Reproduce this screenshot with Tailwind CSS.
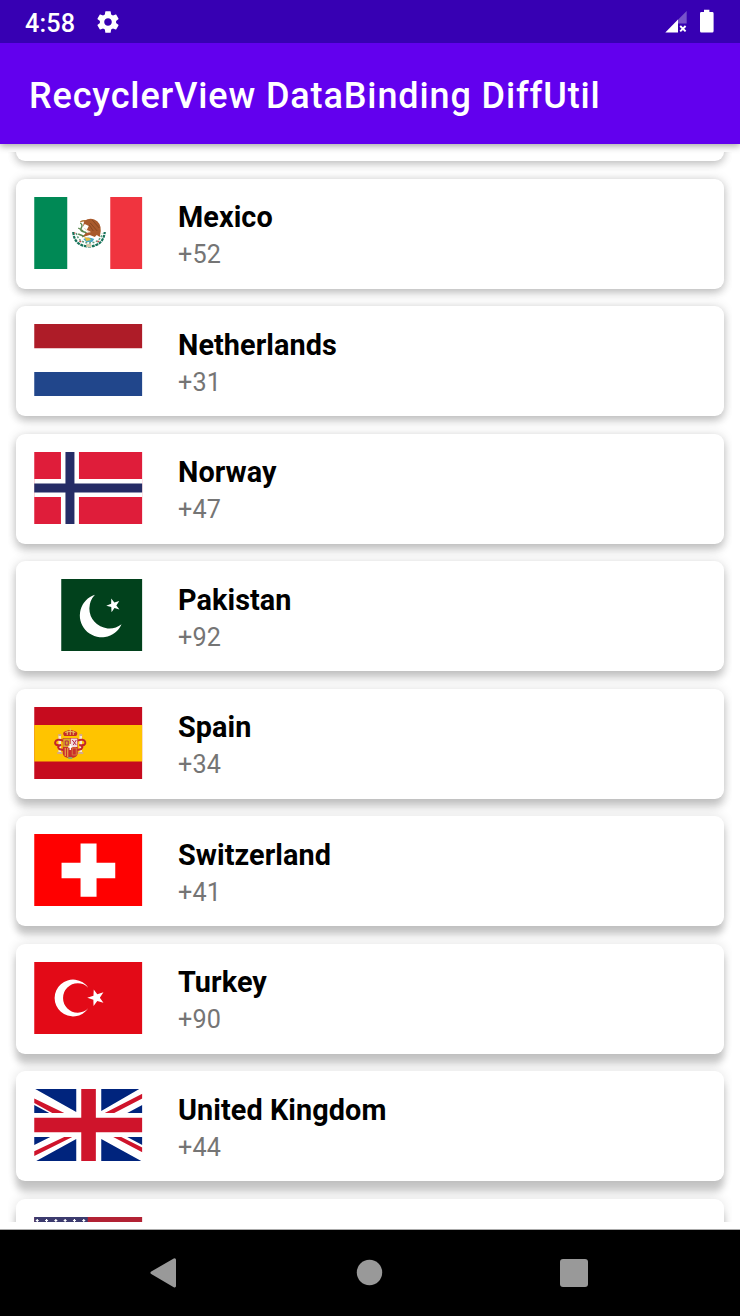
<!DOCTYPE html>
<html lang="en">
<head>
<meta charset="utf-8">
<title>RecyclerView DataBinding DiffUtil</title>
<script src="https://cdn.jsdelivr.net/npm/@tailwindcss/browser@4"></script>
</head>
<body class="bg-white font-['Roboto',sans-serif]">
<div class="w-[740px] h-[1316px] flex flex-col overflow-hidden bg-white">
  <header class="relative z-10 shrink-0 shadow-[0_2px_7px_rgba(0,0,0,0.36)]">
    <div class="h-[43px] bg-[#3700b3] flex items-center pl-[25px] text-white">
      <span class="w-[70px] text-[25.2px] leading-[30px] font-medium pt-[4px] tracking-[0.2px]">4:58</span>
      <svg class="w-[26px] h-[26px]" viewBox="0 0 24 24" fill="#fff"><path d="M19.43 12.98c.04-.32.07-.64.07-.98s-.03-.66-.07-.98l2.11-1.65c.19-.15.24-.42.12-.64l-2-3.46c-.12-.22-.39-.3-.61-.22l-2.49 1c-.52-.4-1.08-.73-1.69-.98l-.38-2.65C14.46 2.18 14.25 2 14 2h-4c-.25 0-.46.18-.49.42l-.38 2.65c-.61.25-1.17.59-1.69.98l-2.49-1c-.23-.09-.49 0-.61.22l-2 3.46c-.13.22-.07.49.12.64l2.11 1.65c-.04.32-.07.65-.07.98s.03.66.07.98l-2.11 1.65c-.19.15-.24.42-.12.64l2 3.46c.12.22.39.3.61.22l2.49-1c.52.4 1.08.73 1.69.98l.38 2.65c.03.24.24.42.49.42h4c.25 0 .46-.18.49-.42l.38-2.65c.61-.25 1.17-.59 1.69-.98l2.49 1c.23.09.49 0 .61-.22l2-3.46c.12-.22.07-.49-.12-.64l-2.11-1.65zM12 15.5c-1.93 0-3.5-1.57-3.5-3.5s1.57-3.5 3.500-3.500 3.500 1.570 3.500 3.500-1.570 3.500-3.500 3.500z"/></svg>
      <svg class="ml-auto w-[23px] h-[24px]" viewBox="665 10 23 24"><path d="M686.700 11v12.500h-9V20z" fill="#fff" opacity=".32"/><path d="M665.300 32.400 678 19.600v12.800z" fill="#fff"/><path d="m680.200 26 5.400 5.400m0-5.400-5.400 5.400" stroke="#fff" stroke-width="1.900"/></svg>
      <svg class="ml-[11px] mr-[25px] w-4 h-[26px]" viewBox="699 9 16 26"><path d="M704 9.800h5.400v2.200h2.800q1.400 0 1.400 1.400v17.700q0 1.500-1.400 1.500h-10.800q-1.400 0-1.400-1.500V13.400q0-1.400 1.400-1.400H704z" fill="#fff"/></svg>
    </div>
    <div class="h-[101px] bg-[#6200ee] flex items-center pl-[29px] pt-[4px]">
      <h1 class="text-[36px] leading-[42px] font-medium tracking-[0.88px] text-white whitespace-nowrap">RecyclerView DataBinding DiffUtil</h1>
    </div>
  </header>

  <main class="mt-2 mx-2 h-[1070px] shrink-0 overflow-hidden">
    <div id="list" class="-mt-[101px] px-2 flex flex-col gap-[17.5px]"></div>
  </main>

  <nav class="mt-[7px] h-[87px] shrink-0 bg-black flex items-center justify-between pl-[150px] pr-[152px] pb-[1px] border-t border-[#aaa]">
    <svg class="w-7 h-8" viewBox="150 1257 28 32"><path d="M174.500 1259.700 152 1272.800 174.500 1286z" fill="#999" stroke="#999" stroke-width="3" stroke-linejoin="round"/></svg>
    <svg class="w-[27px] h-[27px]" viewBox="0 0 27 27"><circle cx="13.500" cy="13.500" r="12.700" fill="#999"/></svg>
    <span class="w-[28px] h-[28px] rounded-[3px] bg-[#999]"></span>
  </nav>
</div>

<svg class="hidden">
  <symbol id="Mexico" viewBox="0 0 108 72">
    <path fill="#fff" d="M0 0h108v72H0z"/><path fill="#008955" d="M0 0h33v72H0z"/><path fill="#f0343f" d="M76 0h32v72H76z"/>
    <g fill="none">
      <path d="M39 35q1 14 15.500 14.500Q69 49 70.500 35" stroke="#17735a" stroke-width="2.200" stroke-dasharray="3 .8"/>
      <path d="M42 36q2 9.500 13 10 11-.5 13-9.500" stroke="#5f9b7c" stroke-width="1.500" stroke-dasharray="2 1.500"/>
      <path d="M46 26q3 2 1 5t3 4-2 5M44 31l5 3M44 37l5 2" stroke="#59884f" stroke-width="1.400"/>
      <path d="M46 25q3-2 6-1" stroke="#b07738" stroke-width="1.500"/>
    </g>
    <path d="M50 24q5-3.500 10-1.500 7 3 6.500 11.500l-1 6-3-2-2 2-5-2-7 2 3-4 5-1-4-2 2-4-4-2-2 3z" fill="#a95a2c"/>
    <path d="m56 26 7 8m-5-11 7 8m-10-3 4 6" stroke="#7e421f" stroke-width=".8"/>
    <path d="M50 31q2 3 6 4" stroke="#ecd2b5" stroke-width="1" fill="none"/>
    <path d="M49 42q5-3 11 0l-2 3h-6z" fill="#48a7c5"/><path d="M50 40l5 1 2 2-5 1z" fill="#e5ba36"/>
    <path d="M52 47h5v3h-5z" fill="#d8c9aa"/><path d="M45 44l2 1m16 0 2-1M40 36h1" stroke="#c44543" stroke-width="1.300"/>
  </symbol>
  <symbol id="Netherlands" viewBox="0 0 108 72"><path fill="#fff" d="M0 0h108v72H0z"/><path fill="#ae1c28" d="M0 0h108v24.300H0z"/><path fill="#21468b" d="M0 48h108v24H0z"/></symbol>
  <symbol id="Norway" viewBox="0 0 108 72"><path fill="#df1d3a" d="M0 0h108v72H0z"/><path d="M35.700 0v72M0 36h108" stroke="#fff" stroke-width="18"/><path d="M35.700 0v72M0 36h108" stroke="#252c66" stroke-width="9"/></symbol>
  <symbol id="Pakistan" viewBox="0 0 108 72">
    <path fill="#01411c" d="M27 0h81v72H27z"/>
    <path d="M60.700 15.700A21.800 21.800 0 1 0 87.300 45.300A19.950 19.950 0 0 1 60.700 15.700z" fill="#fff"/>
    <path d="m77 19.500 3.100 4.100 4.900-1.600-2.900 4.400 3.100 4-5-1.400-2.900 4.300-.3-5.200-5-1.400 4.900-1.900z" fill="#fff"/>
  </symbol>
  <symbol id="Spain" viewBox="0 0 108 72">
    <path fill="#c60b1e" d="M0 0h108v72H0z"/><path fill="#ffc400" d="M0 18h108v36.500H0z"/>
    <path d="M25.500 28v17m21-17v17" stroke="#f4e8cf" stroke-width="2.600"/><path d="M23 46h5m16 0h5M24 28h3m18 0h3" stroke="#d4a98b" stroke-width="1.800"/>
    <path d="M30 34q-8-3-9 1t6 3q-5 1-2 4l4 1M42 34q8-3 9 1t-6 3q5 1 2 4l-4 1" fill="none" stroke="#c2252b" stroke-width="2"/>
    <path d="M30 29q-3-4 2-5 4-2 8 0 5 1 2 5z" fill="#c42c29"/><path d="M31 25.500q5-2.500 10 0M36 21.500v6.500M33 24v4m6-4v4" stroke="#e8c465" stroke-width="1" fill="none"/>
    <path d="M28.500 31h15v15q0 5-7.500 5t-7.500-5z" fill="#c92d2d"/><path d="M29 31.500h7V40h-7z" fill="#d9a72d"/><path d="M36.500 31.500h6.500V40h-6.500z" fill="#f0dadd"/>
    <path d="m38 33 4 5m0-5-3 5M31 34h3v4h-3z" stroke="#b3274a" stroke-width="1" fill="none"/><path d="M31 41v8m2.500-8v9" stroke="#edb848" stroke-width="1"/><path d="M38 41h4v7h-4z" fill="none" stroke="#d6783b"/><path d="M36 37v6m-2-3h4" stroke="#fff" stroke-width="1.400"/><path d="M34 50h4v2h-4z" fill="#8ea468"/>
  </symbol>
  <symbol id="Switzerland" viewBox="0 0 108 72"><path fill="#f00" d="M0 0h108v72H0z"/><path fill="#fff" d="M46.300 9.500h16v19.200h18.700v15.600H62.300v18.400h-16V44.300H27.300V28.700h19z"/></symbol>
  <symbol id="Turkey" viewBox="0 0 108 72">
    <path fill="#e30a17" d="M0 0h108v72H0z"/>
    <path d="M54 25.700A18.400 18.400 0 1 0 54 46.300A14.700 14.700 0 1 1 54 25.700z" fill="#fff"/>
    <path d="m59.500 27.600 3.500 4.600 6.200-1.900-3.600 5.500 3.600 5-6.200-1.900-3.700 5.200-.2-6.400-6.100-2 6.200-2z" fill="#fff"/>
  </symbol>
  <symbol id="UnitedKingdom" viewBox="0 0 108 72">
    <path fill="#fff" d="M0 0h108v72H0z"/>
    <path fill="#00247d" d="M1 0h41v23zM0 16l15 8H0zM67 0h38L67 22zM108 16v8H93zM0 48h16L0 56zM42 50v22H2zM93 48h15v8zM67 50l40 22H67z"/>
    <path fill="#cf142b" d="M0 9.500 30 24H18L0 14zM108 4.800v4.700L80 24h-9.500zM30 48h8L0 67v-4.700zM79 48h8l21 10.500v4.700z"/>
    <path d="M54.300 0v72M0 36h108" stroke="#cf142b" stroke-width="14.600"/>
  </symbol>
  <symbol id="UnitedStates" viewBox="0 0 108 72"><path fill="#b22234" d="M0 0h108v72H0z"/><path d="M0 8.300h108M0 19.400h108M0 30.500h108M0 41.500h108M0 52.600h108M0 63.700h108" stroke="#fff" stroke-width="5.540"/><path fill="#3c3b6e" d="M0 0h53.500v38.800H0z"/><path d="M3 2v3m-1.500-1.500h3M12.300 2v3m-1.500-1.500h3M21.600 2v3m-1.500-1.500h3M30.900 2v3m-1.500-1.500h3M40.200 2v3m-1.500-1.500h3M49.500 2v3M48 3.500h3" stroke="#fff" stroke-width="1.200"/></symbol>
</svg>

<script>
const rows = [["","",""],["Mexico","+52","Mexico"],["Netherlands","+31","Netherlands"],["Norway","+47","Norway"],["Pakistan","+92","Pakistan"],["Spain","+34","Spain"],["Switzerland","+41","Switzerland"],["Turkey","+90","Turkey"],["United Kingdom","+44","UnitedKingdom"],["","","UnitedStates"]];
/* Elevation shadows lengthen towards the bottom of the screen. */
document.getElementById("list").innerHTML = rows.map(([n,c,f],i) => `
<article class="h-[110px] shrink-0 bg-white rounded-[9px] pl-[18px] pb-[2px] flex items-center" style="box-shadow:0 ${(2.5+i).toFixed(2)}px ${(9-i*.2).toFixed(2)}px rgba(0,0,0,.2),0 0 12px rgba(0,0,0,.12)">
  <svg class="w-[108.5px] h-[72px] shrink-0" preserveAspectRatio="none">${f?`<use href="#${f}"/>`:""}</svg>
  <div class="ml-[35.5px] flex flex-col pt-[8px]">
    <h2 class="text-[28.8px] leading-[36px] font-bold text-black whitespace-nowrap tracking-[0.08px]">${n}</h2>
    <p class="text-[25.2px] leading-[39px] text-[#757575] tracking-[0.1px]">${c}</p>
  </div>
</article>`).join("");
</script>
</body>
</html>
